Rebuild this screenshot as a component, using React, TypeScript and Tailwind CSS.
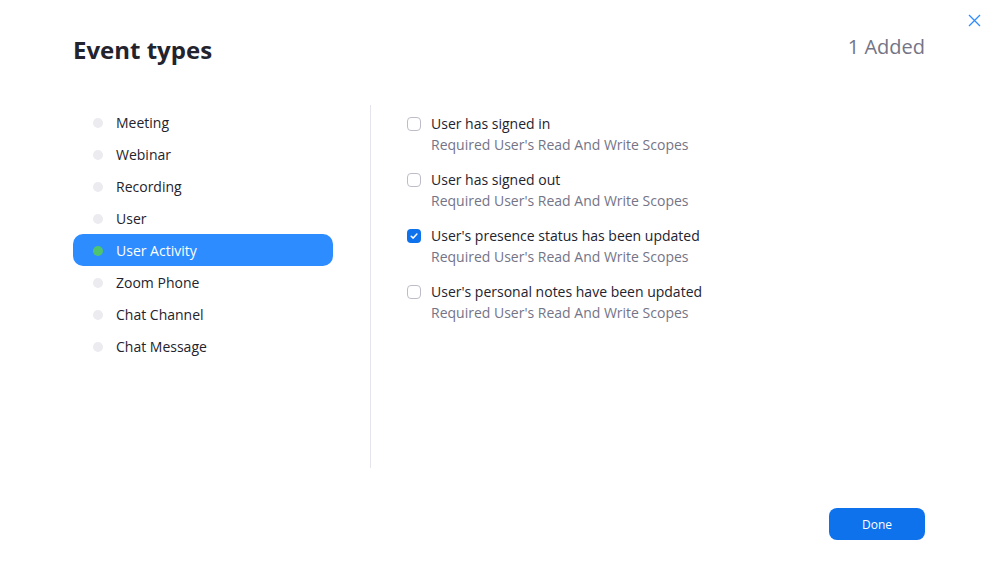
const CATEGORIES = [
  'Meeting',
  'Webinar',
  'Recording',
  'User',
  'User Activity',
  'Zoom Phone',
  'Chat Channel',
  'Chat Message',
];

const EVENTS = [
  { label: 'User has signed in', checked: false },
  { label: 'User has signed out', checked: false },
  { label: "User's presence status has been updated", checked: true },
  { label: "User's personal notes have been updated", checked: false },
];

const ACTIVE = 'User Activity';

function Checkbox({ checked }: { checked: boolean }) {
  if (checked) {
    return (
      <span className="w-[14px] h-[14px] rounded-[4px] bg-[#0e72ed] flex items-center justify-center shrink-0">
        <svg width="10" height="10" viewBox="0 0 10 10" fill="none">
          <path d="M2.2 5.2 4.2 7.1 7.9 3" stroke="white" strokeWidth="1.5" strokeLinecap="round" strokeLinejoin="round" />
        </svg>
      </span>
    );
  }
  return <span className="w-[14px] h-[14px] rounded-[4px] border border-[#bdbdc8] bg-white shrink-0" />;
}

export default function App() {
  return (
    <div className="w-[1003px] h-[561px] bg-white relative font-['Open_Sans',sans-serif] text-[#23232e]">
      <button className="absolute top-[14px] right-[22px] w-[13px] h-[13px] text-[#2d8cff]">
        <svg width="13" height="13" viewBox="0 0 13 13" fill="none">
          <path d="M1 1 12 12M12 1 1 12" stroke="currentColor" strokeWidth="1.3" />
        </svg>
      </button>

      <div className="pl-[73px] pr-[78px] pt-[34px] flex flex-col">
        <div className="flex justify-between items-start">
          <h1 className="text-[24px] leading-[32px] font-bold">Event types</h1>
          <span className="text-[20px] leading-[28px] text-[#747487] -mt-[1px]">1 Added</span>
        </div>

        <div className="mt-[39px] h-[363px] flex">
          <ul className="w-[297px] pr-[37px] pt-[1px]">
            {CATEGORIES.map((c) => {
              const active = c === ACTIVE;
              return (
                <li
                  key={c}
                  className={
                    active
                      ? 'h-[32px] rounded-[10px] bg-[#2d8cff] flex items-center pl-[20px] text-white text-[14px]'
                      : 'h-[32px] rounded-[10px] flex items-center pl-[20px] text-[14px]'
                  }
                >
                  <span className={active ? 'mt-[1px] w-[10px] h-[10px] rounded-full bg-[#4fc470]' : 'mt-[1px] w-[10px] h-[10px] rounded-full bg-[#ebebf0]'} />
                  <span className="ml-[13px]">{c}</span>
                </li>
              );
            })}
          </ul>

          <div className="w-px bg-[#e4e4ed]" />

          <div className="pl-[36px] pt-[8px] flex flex-col gap-[14px]">
            {EVENTS.map((e) => (
              <div key={e.label} className="flex flex-col">
                <div className="flex items-center gap-[10px] text-[14px] leading-[21px]">
                  <Checkbox checked={e.checked} />
                  <span>{e.label}</span>
                </div>
                <div className="pl-[24px] text-[14px] leading-[21px] text-[#747487]">Required User's Read And Write Scopes</div>
              </div>
            ))}
          </div>
        </div>

        <div className="mt-[40px] flex justify-end">
          <button className="w-[96px] h-[32px] pt-[1px] rounded-[8px] bg-[#0e72ed] text-white text-[12px]">Done</button>
        </div>
      </div>
    </div>
  );
}
